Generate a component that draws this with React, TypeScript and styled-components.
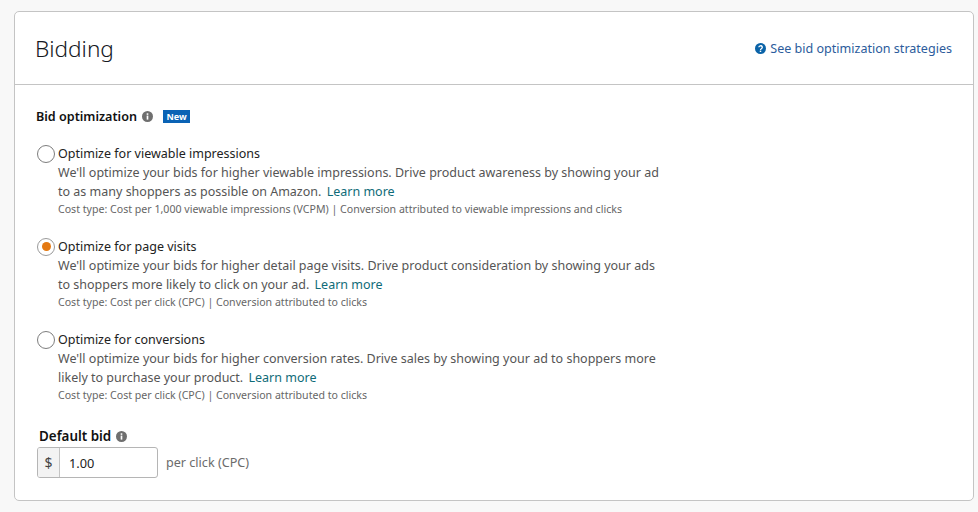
import React, { FunctionComponent } from "react";
import styled, { createGlobalStyle } from "styled-components";

const GlobalStyle = createGlobalStyle`
  html, body {
    margin: 0;
    background: #f8f8f8;
    font-family: "Noto Sans", "Open Sans", Arial, sans-serif;
    color: #111;
  }
`;

const Page = styled.div`
  box-sizing: border-box;
  height: 512px;
  overflow: hidden;
  padding: 11px 4px 0 14px;
`;

const Card = styled.section`
  background: #fff;
  border: 1px solid #c4c4c4;
  border-radius: 5px;
  box-sizing: border-box;
  height: 490px;
`;

const CardHeader = styled.header`
  align-items: center;
  border-bottom: 1px solid #c4c4c4;
  box-sizing: border-box;
  display: flex;
  height: 73px;
  justify-content: space-between;
  padding: 0 21px 0 20px;
`;

const Title = styled.h1`
  color: #16191f;
  font-size: 22.6px;
  font-weight: 300;
  margin: 0;
`;

const HelpLink = styled.a`
  align-items: center;
  color: #2c5c9c;
  display: flex;
  font-size: 12.55px;
  gap: 4px;
`;

const CardBody = styled.div`
  padding: 22px 22px 0 21px;
`;

const SectionLabel = styled.div`
  align-items: center;
  display: flex;
  font-size: 12.6px;
  font-weight: 600;
  height: 18px;
`;

const InfoIcon = styled.svg`
  height: 11px;
  margin-left: 5px;
  width: 11px;
`;

const NewBadge = styled.span`
  background: #0a63b5;
  color: #fff;
  font-size: 9px;
  font-weight: 700;
  line-height: 13px;
  margin-left: 10px;
  padding: 0 3.5px;
`;

const OptionList = styled.div`
  display: flex;
  flex-direction: column;
  gap: 19px;
  margin-top: 19px;
`;

const Option = styled.div`
  column-gap: 3px;
  display: grid;
  grid-template-columns: 19px 1fr;
`;

const Radio = styled.span<{ $checked?: boolean }>`
  align-items: center;
  align-self: center;
  background: #fff;
  border: 1px solid ${({ $checked }) => ($checked ? "#9a9a9a" : "#7d7d7d")};
  border-radius: 50%;
  box-sizing: border-box;
  display: flex;
  height: 18px;
  justify-content: center;
  justify-self: end;
  width: 18px;

  &::after {
    background: #e47911;
    border-radius: 50%;
    content: "";
    display: ${({ $checked }) => ($checked ? "block" : "none")};
    height: 9px;
    width: 9px;
  }
`;

const OptionTitle = styled.div`
  color: #222;
  font-size: 12.5px;
  line-height: 19px;
`;

const OptionText = styled.div`
  color: #555;
  font-size: 12.5px;
  grid-column: 2;
  line-height: 19px;
`;

const Learn = styled.a`
  color: #0f6b78;
  margin-left: 2px;
`;

const CostLine = styled.div`
  color: #666;
  font-size: 10.6px;
  grid-column: 2;
  line-height: 17px;
`;

const BidLabel = styled(SectionLabel)`
  font-size: 13.4px;
  margin: 23px 0 0 3px;
`;

const BidRow = styled.div`
  align-items: center;
  display: flex;
  margin: 2px 0 0 1px;
`;

const BidInput = styled.div`
  background: #fff;
  border: 1px solid #b5b5b5;
  border-radius: 3px;
  box-sizing: border-box;
  display: flex;
  height: 31px;
  overflow: hidden;
  width: 121px;
`;

const Prefix = styled.span`
  align-items: center;
  background: #f3f3f3;
  border-right: 1px solid #c4c4c4;
  color: #444;
  display: flex;
  font-size: 14px;
  justify-content: center;
  width: 21px;
`;

const BidValue = styled.span`
  align-self: center;
  color: #222;
  font-size: 12.8px;
  margin-left: 9px;
`;

const Unit = styled.span`
  color: #6b6b6b;
  font-size: 12.6px;
  margin-left: 8px;
`;

const Info: FunctionComponent = () => (
  <InfoIcon viewBox="0 0 12 12">
    <circle cx="6" cy="6" r="6" fill="#6f6f6f" />
    <rect x="5.1" y="5" width="1.8" height="4.4" fill="#fff" />
    <rect x="5.1" y="2.5" width="1.8" height="1.7" fill="#fff" />
  </InfoIcon>
);

const HelpIcon: FunctionComponent = () => (
  <svg width="11" height="11" viewBox="0 0 12 12">
    <circle cx="6" cy="6" r="6" fill="#0a63a8" />
    <path
      d="M4.2 4.7a1.9 1.7 0 1 1 2.8 1.5c-.7.4-1 .7-1 1.3"
      fill="none"
      stroke="#fff"
      strokeWidth="1.4"
    />
    <rect x="5.2" y="8.3" width="1.6" height="1.5" fill="#fff" />
  </svg>
);

interface OptionData {
  title: string;
  lines: [string, string];
  cost: string;
  checked?: boolean;
}

const options: OptionData[] = [
  {
    title: "Optimize for viewable impressions",
    lines: [
      "We'll optimize your bids for higher viewable impressions. Drive product awareness by showing your ad",
      "to as many shoppers as possible on Amazon.",
    ],
    cost: "Cost type: Cost per 1,000 viewable impressions (VCPM) | Conversion attributed to viewable impressions and clicks",
  },
  {
    title: "Optimize for page visits",
    lines: [
      "We'll optimize your bids for higher detail page visits. Drive product consideration by showing your ads",
      "to shoppers more likely to click on your ad.",
    ],
    cost: "Cost type: Cost per click (CPC) | Conversion attributed to clicks",
    checked: true,
  },
  {
    title: "Optimize for conversions",
    lines: [
      "We'll optimize your bids for higher conversion rates. Drive sales by showing your ad to shoppers more",
      "likely to purchase your product.",
    ],
    cost: "Cost type: Cost per click (CPC) | Conversion attributed to clicks",
  },
];

export default function App() {
  return (
    <Page>
      <GlobalStyle />
      <Card>
        <CardHeader>
          <Title>Bidding</Title>
          <HelpLink>
            <HelpIcon />
            See bid optimization strategies
          </HelpLink>
        </CardHeader>
        <CardBody>
          <SectionLabel>
            Bid optimization
            <Info />
            <NewBadge>New</NewBadge>
          </SectionLabel>
          <OptionList>
            {options.map((option) => (
              <Option key={option.title}>
                <Radio $checked={option.checked} />
                <OptionTitle>{option.title}</OptionTitle>
                <OptionText>
                  {option.lines[0]}
                  <br />
                  {option.lines[1]} <Learn>Learn more</Learn>
                </OptionText>
                <CostLine>{option.cost}</CostLine>
              </Option>
            ))}
          </OptionList>
          <BidLabel>
            Default bid
            <Info />
          </BidLabel>
          <BidRow>
            <BidInput>
              <Prefix>$</Prefix>
              <BidValue>1.00</BidValue>
            </BidInput>
            <Unit>per click (CPC)</Unit>
          </BidRow>
        </CardBody>
      </Card>
    </Page>
  );
}
